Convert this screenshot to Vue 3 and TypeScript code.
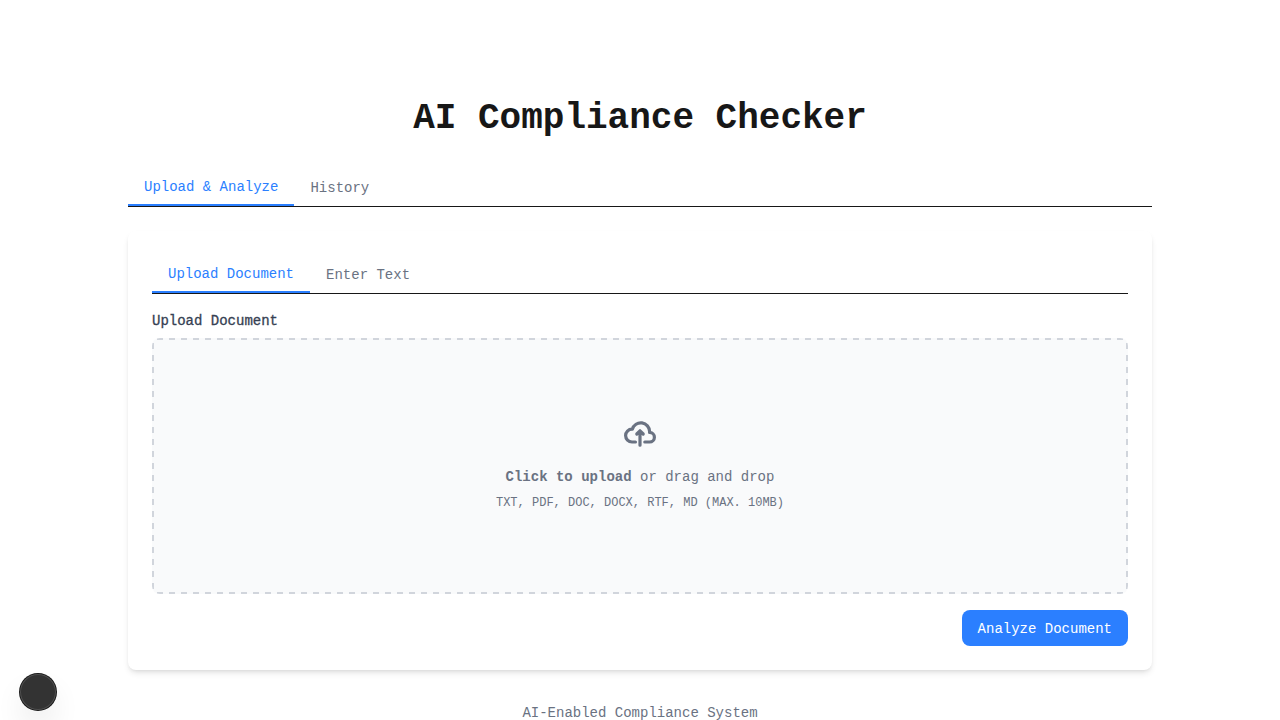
<script setup lang="ts">
import { ref } from 'vue'

const sections = ['Upload & Analyze', 'History']
const modes = ['Upload Document', 'Enter Text']
const section = ref<string>(sections[0])
const mode = ref<string>(modes[0])
</script>

<template>
  <div class="page">
    <main class="container">
      <h1 class="title">AI Compliance Checker</h1>
      <nav class="tabs outer">
        <button
          v-for="name in sections"
          :key="name"
          type="button"
          class="tab"
          :class="{ active: section === name }"
          @click="section = name"
        >{{ name }}</button>
      </nav>
      <form class="card" @submit.prevent>
        <div class="tabs inner">
          <button
            v-for="name in modes"
            :key="name"
            type="button"
            class="tab"
            :class="{ active: mode === name }"
            @click="mode = name"
          >{{ name }}</button>
        </div>
        <label class="field-label" for="document">Upload Document</label>
        <label class="dropzone" for="document">
          <svg class="upload-icon" viewBox="0 0 20 16" fill="none" aria-hidden="true">
            <path
              stroke="currentColor"
              stroke-width="2"
              stroke-linecap="round"
              stroke-linejoin="round"
              d="M13 13h3a3 3 0 0 0 0-6h-.025A5.56 5.56 0 0 0 16 6.5 5.5 5.5 0 0 0 5.207 5.021C5.137 5.017 5.071 5 5 5a4 4 0 0 0 0 8h2.167M10 15V6m0 0L8 8m2-2 2 2"
            />
          </svg>
          <span class="prompt"><strong>Click to upload</strong> or drag and drop</span>
          <span class="formats">TXT, PDF, DOC, DOCX, RTF, MD (MAX. 10MB)</span>
          <input id="document" class="file" type="file" accept=".txt,.pdf,.doc,.docx,.rtf,.md" />
        </label>
        <div class="actions">
          <button class="submit" type="submit">Analyze Document</button>
        </div>
      </form>
      <footer class="footer">AI-Enabled Compliance System</footer>
    </main>
    <button class="badge" type="button" aria-label="Open tools"></button>
  </div>
</template>

<style>
body {
  background: #fff;
}
</style>

<style scoped>
.page {
  box-sizing: border-box;
  min-height: 100vh;
  padding: 96px 96px 0;
  color: #171717;
  font-family: "Liberation Mono", monospace;
  font-size: 14px;
  line-height: 20px;
}
.container {
  max-width: 1024px;
  margin: 0 auto;
}
.title {
  margin: 0 0 26px;
  font-size: 36px;
  line-height: 46px;
  font-weight: 700;
  text-align: center;
}
.tabs {
  display: flex;
  border-bottom: 1px solid #171717;
}
.outer {
  margin-bottom: 24px;
}
.inner {
  margin-bottom: 16px;
}
.tab {
  padding: 9px 16px 7px;
  border: 0;
  background: none;
  color: #6a7282;
  font: inherit;
  cursor: pointer;
}
.tab.active {
  border-bottom: 2px solid #2b7fff;
  color: #2b7fff;
}
.card {
  padding: 24px;
  border-radius: 8px;
  background: #fff;
  box-shadow: 0 4px 6px -1px rgba(0, 0, 0, 0.1), 0 2px 4px -2px rgba(0, 0, 0, 0.1);
}
.field-label {
  display: block;
  margin-bottom: 6px;
  color: #364153;
  line-height: 22px;
  font-weight: 500;
  -webkit-text-stroke: 0.3px currentColor;
}
.dropzone {
  --dash: #d1d5dc 0 6px, transparent 6px 12px;
  display: flex;
  flex-direction: column;
  align-items: center;
  justify-content: center;
  box-sizing: border-box;
  min-height: 256px;
  padding: 22px 2px 26px;
  border-radius: 8px;
  background:
    repeating-linear-gradient(90deg, var(--dash)) center top / calc(100% - 10px) 2px no-repeat,
    repeating-linear-gradient(90deg, var(--dash)) center bottom / calc(100% - 10px) 2px no-repeat,
    repeating-linear-gradient(180deg, var(--dash)) left center / 2px calc(100% - 10px) no-repeat,
    repeating-linear-gradient(180deg, var(--dash)) right center / 2px calc(100% - 10px) no-repeat,
    #f9fafb;
  color: #6a7282;
  cursor: pointer;
}
.upload-icon {
  width: 32px;
  height: 32px;
  margin-bottom: 16px;
}
.prompt {
  margin-bottom: 6px;
  line-height: 22px;
}
.prompt strong {
  font-weight: 600;
}
.formats {
  font-size: 12px;
  line-height: 18px;
  margin-bottom: -2px;
}
.file {
  display: none;
}
.actions {
  display: flex;
  justify-content: flex-end;
  margin-top: 16px;
}
.submit {
  padding: 9px 16px 7px;
  border: 0;
  border-radius: 8px;
  background: #2b7fff;
  color: #fff;
  font: inherit;
  cursor: pointer;
}
.footer {
  margin-top: 32px;
  color: #6a7282;
  line-height: 22px;
  text-align: center;
}
.badge {
  position: fixed;
  left: 20px;
  bottom: 10px;
  width: 36px;
  height: 36px;
  padding: 0;
  border: 0;
  border-radius: 50%;
  background: #333;
  box-shadow:
    0 0 0 1px #171717,
    inset 0 0 0 1px rgba(255, 255, 255, 0.14),
    0 16px 32px -8px rgba(0, 0, 0, 0.24);
}
</style>
